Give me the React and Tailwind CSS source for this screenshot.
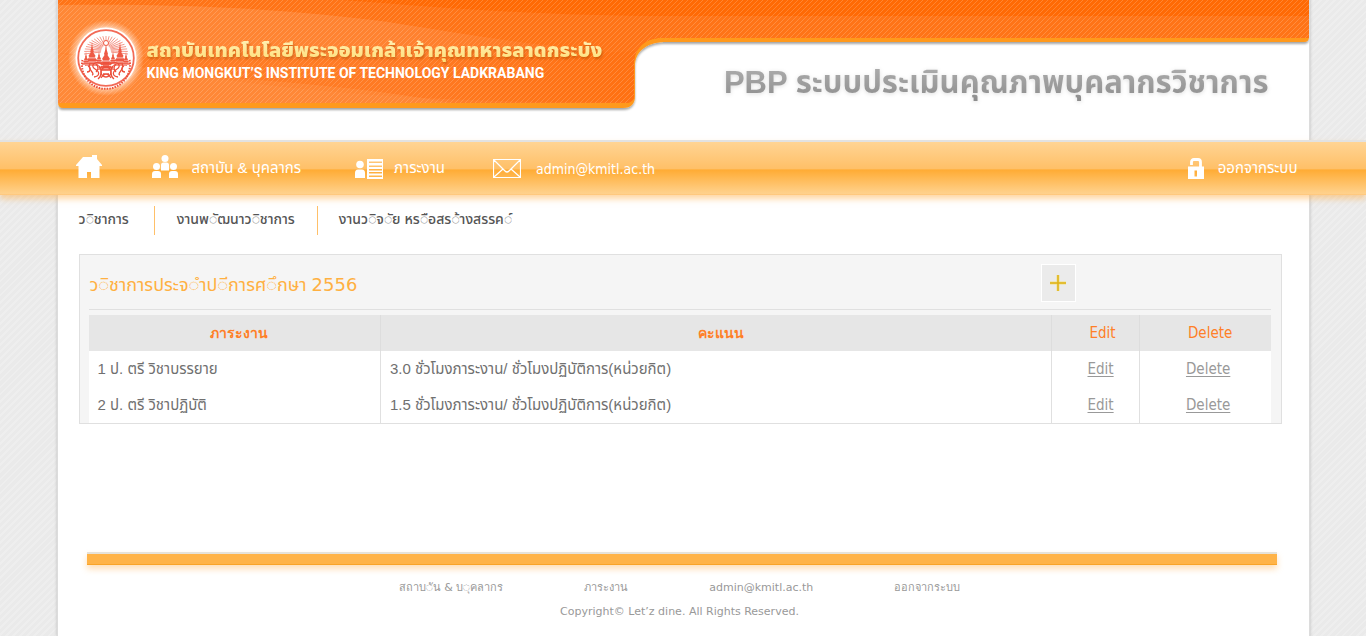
import React from "react";

const rows = [
  { id: 1, task: "1 ป. ตรี วิชาบรรยาย", score: "3.0 ชั่วโมงภาระงาน/ ชั่วโมงปฏิบัติการ(หน่วยกิต)" },
  { id: 2, task: "2 ป. ตรี วิชาปฏิบัติ", score: "1.5 ชั่วโมงภาระงาน/ ชั่วโมงปฏิบัติการ(หน่วยกิต)" },
];

const column =
  "mx-auto w-full max-w-[1251px] bg-white shadow-[0_0_0_1px_#dcdcdc,0_0_3px_1px_#bdbdbd]";

function HeaderArt() {
  return (
    <svg
      className="absolute inset-0 h-[116px] w-full"
      viewBox="0 0 1251 116"
      preserveAspectRatio="none"
      aria-hidden="true"
    >
      <defs>
        <pattern id="stripes" width="5" height="5" patternUnits="userSpaceOnUse">
          <path d="M-1 1 1 -1M0 5 5 0M4 6 6 4" stroke="#fff" strokeOpacity="0.2" strokeWidth="0.9" />
        </pattern>
        <linearGradient id="sheen">
          <stop offset="0" stopColor="#ff8836" />
          <stop offset="0.6" stopColor="#ff8230" />
          <stop offset="1" stopColor="#ff7417" />
        </linearGradient>
        <filter id="drop" x="-2%" y="-10%" width="104%" height="130%">
          <feDropShadow dx="0" dy="2" stdDeviation="1.2" floodColor="#000" floodOpacity="0.35" />
        </filter>
        <clipPath id="face">
          <path d="M0 0H1251V38H603C587 38 577 48 576 62V95Q576 103 567 103H0Z" />
        </clipPath>
      </defs>
      <path
        d="M0 0H1251V37Q1251 42 1246 42H608C592 42 577 49 577 66V96Q577 108 565 108H5Q0 108 0 102Z"
        fill="#ff991c"
        filter="url(#drop)"
      />
      <g clipPath="url(#face)">
        <rect width="1251" height="110" fill="#ff6a05" />
        <path d="M0 0H285C400 9 490 16 620 16H1251V110H0Z" fill="#ff7417" />
        <path d="M0 5C130 3 240 10 330 22C430 38 500 50 577 51V110H0Z" fill="url(#sheen)" />
        <path d="M0 53C90 68 130 76 200 84C320 98 440 104 577 101V51C400 60 130 62 0 53Z" fill="#ff6a05" fillOpacity="0.3" />
        <path d="M0 66C160 78 280 82 400 104H0Z" fill="#ff8a3a" fillOpacity="0.6" />
        <rect width="1251" height="110" fill="url(#stripes)" />
      </g>
    </svg>
  );
}

function Spire({ x, y, s }) {
  return (
    <g transform={`translate(${x} ${y}) scale(${s})`} fill="#ee5a45">
      <path d="M0-17 .8-10 2-6 1.5-5 4-1 3 0 6 4 4.5 5 8 10H-8L-4.5 5-6 4-3 0-4-1-1.5-5-2-6-.8-10Z" />
      <path d="M-4 1H4M-6 5.500H6M-7 9H7" stroke="#fff" strokeWidth="0.7" />
    </g>
  );
}

function Seal() {
  const rays = Array.from({ length: 23 }, (_, i) => (i * Math.PI) / 22);
  return (
    <svg viewBox="0 0 80 80" className="h-20 w-20 shrink-0" role="img" aria-label="KMITL">
      <defs>
        <radialGradient id="glow">
          <stop offset="0.74" stopColor="#fff" stopOpacity="0.8" />
          <stop offset="0.86" stopColor="#fff" stopOpacity="0.35" />
          <stop offset="1" stopColor="#fff" stopOpacity="0" />
        </radialGradient>
      </defs>
      <circle cx="40" cy="40" r="38" fill="url(#glow)" />
      <circle cx="40" cy="40" r="30.500" fill="#fff" />
      <circle cx="40" cy="40" r="27.800" fill="none" stroke="#f26a57" strokeWidth="1.800" />
      <g stroke="#f5988b" strokeWidth="1">
        {rays.map((a) => (
          <path
            key={a}
            d={`M${40 + 5 * Math.cos(a)} ${34 - 7 * Math.sin(a)}L${40 + 22 * Math.cos(a)} ${36 - 18 * Math.sin(a)}`}
          />
        ))}
      </g>
      <Spire x={26} y={39} s={0.9} />
      <Spire x={54} y={39} s={0.9} />
      <Spire x={20} y={42} s={0.5} />
      <Spire x={60} y={42} s={0.5} />
      <Spire x={33} y={41} s={0.5} />
      <Spire x={47} y={41} s={0.5} />
      <Spire x={40} y={42} s={1} />
      <circle cx="40" cy="25" r="2.500" fill="#fff" stroke="#ee5a45" strokeWidth="1" />
      <g fill="none" stroke="#ec4f3b" strokeWidth="1.300">
        <path d="M36 46C28 42 24 48 29 51S34 58 28 59M44 46C52 42 56 48 51 51S46 58 52 59" />
        <path d="M22 48C25 49 25 54 21 54M58 48C55 49 55 54 59 54M33 48C36 52 36 58 32 61M47 48C44 52 44 58 48 61" />
        <path d="M24 46C20 50 30 56 26 57M56 46C60 50 50 56 54 57M30 46Q34 50 30 54M50 46Q46 50 50 54" />
        <path d="M35 60Q40 52 45 60M37 48H43M36 52H44M37 56H43M37 45H43" />
        <circle cx="40" cy="54" r="5" />
      </g>
      <path
        d="M16.500 42A24 24 0 1 0 63.500 42"
        fill="none"
        stroke="#ec4f3b"
        strokeWidth="2"
        strokeDasharray="1.500 1.200"
      />
    </svg>
  );
}

function HomeIcon() {
  return (
    <svg viewBox="0 0 26 24" className="mb-1 h-6 w-[26px]" fill="#fff" aria-hidden="true">
      <path d="M7 2H16V0H21V4L26 10V11H23.500V23H15V17H11V23H2.500V11H0V10Z" />
    </svg>
  );
}

function PeopleIcon() {
  return (
    <svg viewBox="0 0 26 24" className="mb-1 h-6 w-[26px]" fill="#fff" aria-hidden="true">
      <circle cx="13" cy="3.500" r="3.500" />
      <circle cx="4.500" cy="11.500" r="3.500" />
      <circle cx="21.500" cy="11.500" r="3.500" />
      <path d="M9 15.500V10Q9 7.500 11.500 7.500H14.500Q17 7.500 17 10V15.500ZM0 23V19Q0 16 3 16H6Q9 16 9 19V23ZM17 23V19Q17 16 20 16H23Q26 16 26 19V23Z" />
    </svg>
  );
}

function ListIcon() {
  return (
    <svg viewBox="0 0 28 20" className="h-5 w-7" fill="#fff" aria-hidden="true">
      <circle cx="5" cy="5.500" r="3.800" />
      <path d="M0 19V14Q0 10.500 3 10.500H7Q10 10.500 10 14V19Z" />
      <path d="M12 0H28V20H12ZM14 2.500V4H27V2.500ZM14 6.500V8H27V6.500ZM14 10V11.500H27V10ZM14 13V14.500H27V13ZM14 16.500V18H27V16.500Z" fillRule="evenodd" />
    </svg>
  );
}

function MailIcon() {
  return (
    <svg viewBox="0 0 28 19" className="h-[19px] w-7" fill="none" stroke="#fff" aria-hidden="true">
      <path d="M.5.5H27.500V18.500H.5ZM1 1 12 12Q14 14 16 12L27 1M1 18 10 10M27 18 18 10" strokeWidth="1.200" />
    </svg>
  );
}

function LockIcon() {
  return (
    <svg viewBox="0 0 16 21" className="h-[21px] w-4" aria-hidden="true">
      <path d="M3.500 7V4Q3.500 1.500 6 1.500H10Q12.500 1.500 12.500 4V9" fill="none" stroke="#fff" strokeWidth="2.800" />
      <path d="M0 8.500H16V21H0ZM6.500 12.500V18.500H9V12.500Z" fill="#fff" fillRule="evenodd" />
    </svg>
  );
}

export default function App() {
  return (
    <div className="flex min-h-screen flex-col bg-[#ebebeb] bg-[repeating-linear-gradient(135deg,#eaeaea_0_3px,#eeeeee_3px_5px)] font-['Liberation_Sans','Noto_Sans_Thai',sans-serif] text-[15px]">
      <header className={column}>
        <div className="relative flex h-[140px] items-start justify-between">
          <HeaderArt />
          <div className="relative flex items-center pt-[18px] pl-2">
            <Seal />
            <div className="flex flex-col pl-px">
              <p className="bg-gradient-to-b from-[#fff3c0] to-[#ffdc6a] bg-clip-text text-xl leading-[30px] font-black whitespace-nowrap text-transparent drop-shadow-[1px_2px_1px_#b8500099]">
                สถาบันเทคโนโลยีพระจอมเกล้าเจ้าคุณทหารลาดกระบัง
              </p>
              <p className="font-['Roboto',sans-serif] text-sm leading-4 font-bold whitespace-nowrap text-white">
                KING MONGKUT’S INSTITUTE OF TECHNOLOGY LADKRABANG
              </p>
            </div>
          </div>
          <h1 className="relative bg-gradient-to-b from-[#b8b8b8] from-50% to-[#858585] bg-clip-text pt-[56px] pr-10 text-[31px] leading-[54px] font-bold whitespace-nowrap text-transparent drop-shadow-[0_1px_2px_#00000022]">
            PBP ระบบประเมินคุณภาพบุคลากรวิชาการ
          </h1>
        </div>
      </header>

      <nav className="relative z-10 h-[55px] border-t-2 border-[#e2e2e2] bg-[linear-gradient(#ffd494,#ffc068_50%,#ffac35_53%,#ffd18c_97%,#ffc578)] shadow-[0_4px_6px_#ffb04a80]">
        <div className="mx-auto flex h-full w-full max-w-[1251px] items-center pr-[11px] pl-[18px] text-white">
          <a href="#home" aria-label="Home"><HomeIcon /></a>
          <a href="#people" className="ml-[50px] flex items-center gap-[14px]">
            <PeopleIcon />
            สถาบัน &amp; บุคลากร
          </a>
          <a href="#work" className="ml-[54px] flex items-center gap-[11px]">
            <ListIcon />
            ภาระงาน
          </a>
          <a href="#mail" className="ml-12 flex items-center gap-[15px] font-['DejaVu_Sans_Condensed','DejaVu_Sans',sans-serif] text-sm">
            <MailIcon />
            admin@kmitl.ac.th
          </a>
          <a href="#logout" className="ml-auto flex items-center gap-[14px]">
            <LockIcon />
            ออกจากระบบ
          </a>
        </div>
      </nav>

      <div className={`${column} flex flex-1 flex-col`}>
        <main className="pr-[27px] pl-[21px]">
          <div className="flex h-[59px] items-start pt-[11px] text-sm leading-[27px] font-medium text-[#555]">
            <a href="#academic" className="border-r border-[#ffc069] pr-[25px] pb-0.5">ว◌ิชาการ</a>
            <a href="#develop" className="border-r border-[#ffc069] px-[22px] pb-0.5">งานพ◌ัฒนาว◌ิชาการ</a>
            <a href="#research" className="pl-[21px]">งานว◌ิจ◌ัย หร◌ือสร◌้างสรรค◌์</a>
          </div>

          <section className="border border-[#e0e0e0] bg-[#f5f5f5] pr-[10px] pl-[9px]">
            <div className="flex h-[55px] items-center justify-between border-b border-[#e0e0e0] pt-0.5">
              <h2 className="pt-1 pl-px text-[18px] text-[#ffb041]">
                ว◌ิชาการประจ◌ำป◌ีการศ◌ึกษา{" "}
                <span className="font-['DejaVu_Sans',sans-serif]">2556</span>
              </h2>
              <button
                type="button"
                aria-label="Add"
                className="mr-[195px] flex h-[38px] w-[35px] items-center justify-center border border-white bg-[#ebebeb]"
              >
                <svg viewBox="0 0 18 18" className="h-[18px] w-[18px]" aria-hidden="true">
                  <path d="M9 1V17M1 9H17" stroke="#f1e28b" strokeWidth="3" />
                  <path d="M9 1V17M1 9H17" stroke="#deb116" strokeWidth="1.500" />
                </svg>
              </button>
            </div>
            <table className="mt-[5px] w-full table-fixed border-collapse bg-white text-[#707070]">
              <colgroup>
                <col className="w-[24.7%]" />
                <col className="w-[56.8%]" />
                <col className="w-[7.4%]" />
                <col className="w-[11.1%]" />
              </colgroup>
              <thead>
                <tr className="h-9 bg-[#e6e6e6] font-['DejaVu_Sans_Condensed','DejaVu_Sans',sans-serif] text-[#ff7f27]">
                  <th className="border-r border-[#dddddd] pl-[10px] text-sm font-bold">ภาระงาน</th>
                  <th className="border-r border-[#dddddd] pl-[10px] text-sm font-bold">คะแนน</th>
                  <th className="border-r border-[#dddddd] pl-[14px] font-medium">Edit</th>
                  <th className="pl-[10px] font-medium">Delete</th>
                </tr>
              </thead>
              <tbody>
                {rows.map((r) => (
                  <tr key={r.id} className="h-9">
                    <td className="border-r border-[#e0e0e0] pl-[9px]">{r.task}</td>
                    <td className="border-r border-[#e0e0e0] pl-[9px]">{r.score}</td>
                    <td className="border-r border-[#e0e0e0] pl-[10px] text-center font-['DejaVu_Sans_Condensed','DejaVu_Sans',sans-serif] text-[#999]">
                      <a href="#edit" className="underline underline-offset-2">Edit</a>
                    </td>
                    <td className="pl-[6px] text-center font-['DejaVu_Sans_Condensed','DejaVu_Sans',sans-serif] text-[#999]">
                      <a href="#delete" className="underline underline-offset-2">Delete</a>
                    </td>
                  </tr>
                ))}
              </tbody>
            </table>
          </section>
        </main>

        <footer className="mt-auto pr-8 pb-4 pl-[29px] font-['DejaVu_Sans',sans-serif] text-[11px] text-[#999]">
          <div className="h-[13px] border-t-2 border-b border-t-[#e6e2d8] border-b-[#f9a428] bg-[#ffb347] shadow-[0_4px_6px_#ffb04a66]" />
          <div className="flex justify-center gap-[81px] pt-[15px] pr-1 leading-4">
            <a href="#people">สถาบ◌ัน &amp; บ◌ุคลากร</a>
            <a href="#work">ภาระงาน</a>
            <a href="#mail">admin@kmitl.ac.th</a>
            <a href="#logout">ออกจากระบบ</a>
          </div>
          <p className="pt-2 pr-1 text-center leading-4">Copyright© Let’z dine. All Rights Reserved.</p>
        </footer>
      </div>
    </div>
  );
}
